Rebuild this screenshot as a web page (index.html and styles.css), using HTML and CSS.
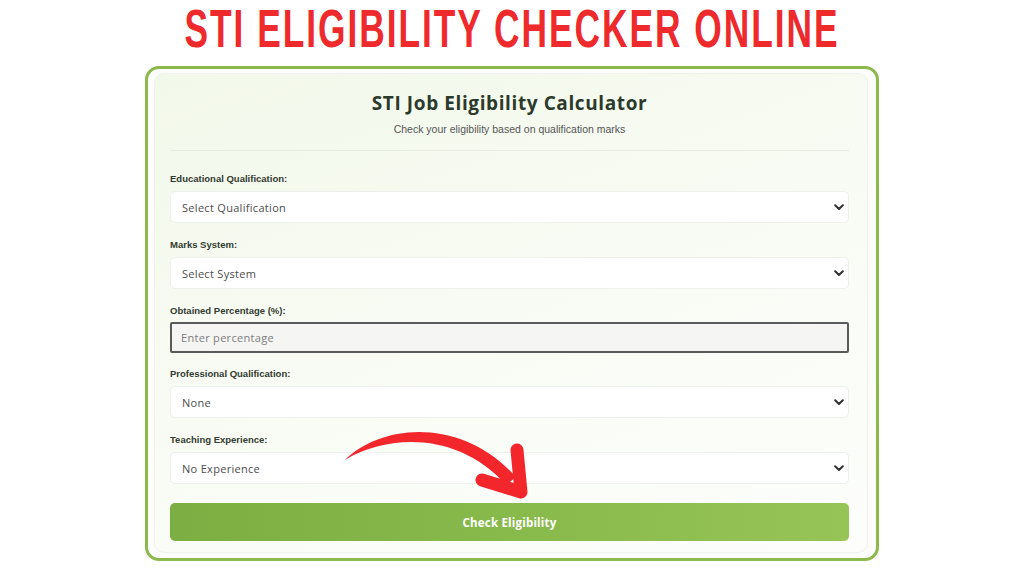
FILE: index.html
```html
<!DOCTYPE html>
<html lang="en">
<head>
<meta charset="utf-8">
<title>STI Eligibility Checker Online</title>
<link rel="stylesheet" href="styles.css">
</head>
<body>
<header class="banner">
  <h1 class="banner-title">
    <svg class="banner-svg" viewBox="0 0 1024 58" width="1024" height="58">
      <text class="banner-text" x="512" y="47" text-anchor="middle" textLength="655" lengthAdjust="spacingAndGlyphs">STI Eligibility Checker Online</text>
    </svg>
  </h1>
</header>
<main class="frame">
  <section class="calc">
    <div class="calc-head">
      <h2 class="calc-title">STI Job Eligibility Calculator</h2>
      <p class="calc-sub">Check your eligibility based on qualification marks</p>
    </div>
    <form class="calc-form">
      <div class="field">
        <label class="field-label">Educational Qualification:</label>
        <div class="select-wrap">
          <select class="select"><option>Select Qualification</option></select>
          <svg class="chev" viewBox="0 0 10 7" width="10" height="7"><polyline points="1.2,1.3 5,5 8.8,1.3" fill="none" stroke="#333" stroke-width="2.1" stroke-linecap="round" stroke-linejoin="round"/></svg>
        </div>
      </div>
      <div class="field">
        <label class="field-label">Marks System:</label>
        <div class="select-wrap">
          <select class="select"><option>Select System</option></select>
          <svg class="chev" viewBox="0 0 10 7" width="10" height="7"><polyline points="1.2,1.3 5,5 8.8,1.3" fill="none" stroke="#333" stroke-width="2.1" stroke-linecap="round" stroke-linejoin="round"/></svg>
        </div>
      </div>
      <div class="field field-input">
        <label class="field-label">Obtained Percentage (%):</label>
        <input class="input" type="text" placeholder="Enter percentage">
      </div>
      <div class="field">
        <label class="field-label">Professional Qualification:</label>
        <div class="select-wrap">
          <select class="select"><option>None</option></select>
          <svg class="chev" viewBox="0 0 10 7" width="10" height="7"><polyline points="1.2,1.3 5,5 8.8,1.3" fill="none" stroke="#333" stroke-width="2.1" stroke-linecap="round" stroke-linejoin="round"/></svg>
        </div>
      </div>
      <div class="field">
        <label class="field-label">Teaching Experience:</label>
        <div class="select-wrap">
          <select class="select"><option>No Experience</option></select>
          <svg class="chev" viewBox="0 0 10 7" width="10" height="7"><polyline points="1.2,1.3 5,5 8.8,1.3" fill="none" stroke="#333" stroke-width="2.1" stroke-linecap="round" stroke-linejoin="round"/></svg>
        </div>
      </div>
      <button class="btn" type="button">Check Eligibility</button>
    </form>
  </section>
</main>
<svg class="arrow" viewBox="0 0 210 95" width="210" height="95">
  <path d="M15,45 C50,10 130,0 186,62 L176,70 C130,18 60,18 15,45 Z" fill="#f2262b"/>
  <polyline points="152,65 191,77 187,35" fill="none" stroke="#f2262b" stroke-width="13" stroke-linecap="round" stroke-linejoin="round"/>
</svg>
</body>
</html>
```
FILE: styles.css
```css
* { box-sizing: border-box; }
html, body { margin: 0; padding: 0; }
body {
  background: #ffffff;
  width: 1024px;
  height: 576px;
  overflow: hidden;
  position: relative;
  font-family: "Liberation Sans", Arial, sans-serif;
}
.banner {
  height: 66px;
}
.banner-title {
  margin: 0;
  height: 58px;
  line-height: 0;
}
.banner-svg { display: block; }
.banner-text {
  font-family: "Liberation Sans", Arial, sans-serif;
  font-weight: 700;
  font-size: 54px;
  fill: #ee2a2c;
  text-transform: uppercase;
  letter-spacing: 3px;
}
.frame {
  width: 734px;
  height: 495px;
  margin: 0 auto;
  border: 3px solid #8cb94c;
  border-radius: 14px;
  padding: 4px 8px 5px 6px;
  background: #fcfdfa;
}
.calc {
  height: 100%;
  border: 1px solid #eef2ea;
  border-radius: 10px;
  padding: 17px 18px 10px 15px;
  background: linear-gradient(160deg, #f2f8ea 0%, #f8fbf3 45%, #fdfefc 100%);
}
.calc-head {
  text-align: center;
  border-bottom: 1px solid #e7ece2;
  padding-bottom: 14px;
  margin-bottom: 21px;
}
.calc-title {
  margin: 0;
  font-family: "Open Sans", sans-serif;
  font-weight: 700;
  font-size: 19px;
  letter-spacing: 0.6px;
  line-height: 24px;
  color: #2c3a2b;
}
.calc-sub {
  margin: 7px 0 0;
  font-size: 10.5px;
  line-height: 14px;
  color: #555;
}
.calc-form { display: flex; flex-direction: column; }
.field { display: flex; flex-direction: column; margin-bottom: 15px; }
.field-label {
  font-size: 9.5px;
  line-height: 13px;
  font-weight: 700;
  color: #333a30;
  margin-bottom: 6px;
}
.field-input .field-label { margin-bottom: 5px; }
.select-wrap { position: relative; }
.select {
  appearance: none;
  -webkit-appearance: none;
  width: 100%;
  height: 32px;
  border: 1px solid #eef0ec;
  border-radius: 5px;
  background: #ffffff;
  padding: 0 11px;
  font-family: "Open Sans", sans-serif;
  font-size: 11px;
  letter-spacing: 0.3px;
  color: #4d4d4d;
  outline: none;
}
.chev {
  position: absolute;
  right: 5px;
  top: 13px;
}
.input {
  width: 100%;
  height: 31px;
  border: 2px solid #5a5a5a;
  border-radius: 2px;
  background: #f5f5f4;
  padding: 0 9px;
  font-family: "Open Sans", sans-serif;
  font-size: 11px;
  letter-spacing: 0.3px;
  color: #333;
  outline: none;
}
.input::placeholder { color: #7d7d7d; }
.field-input { margin-bottom: 14px; }
.field:last-of-type { margin-bottom: 19px; }
.btn {
  height: 38px;
  border: none;
  border-radius: 5px;
  background: linear-gradient(90deg, #7cae43 0%, #88b94b 50%, #97c457 100%);
  color: #ffffff;
  font-family: "Open Sans", sans-serif;
  font-weight: 700;
  font-size: 11.5px;
  letter-spacing: 0.2px;
}
.arrow {
  position: absolute;
  left: 330px;
  top: 415px;
}
```
